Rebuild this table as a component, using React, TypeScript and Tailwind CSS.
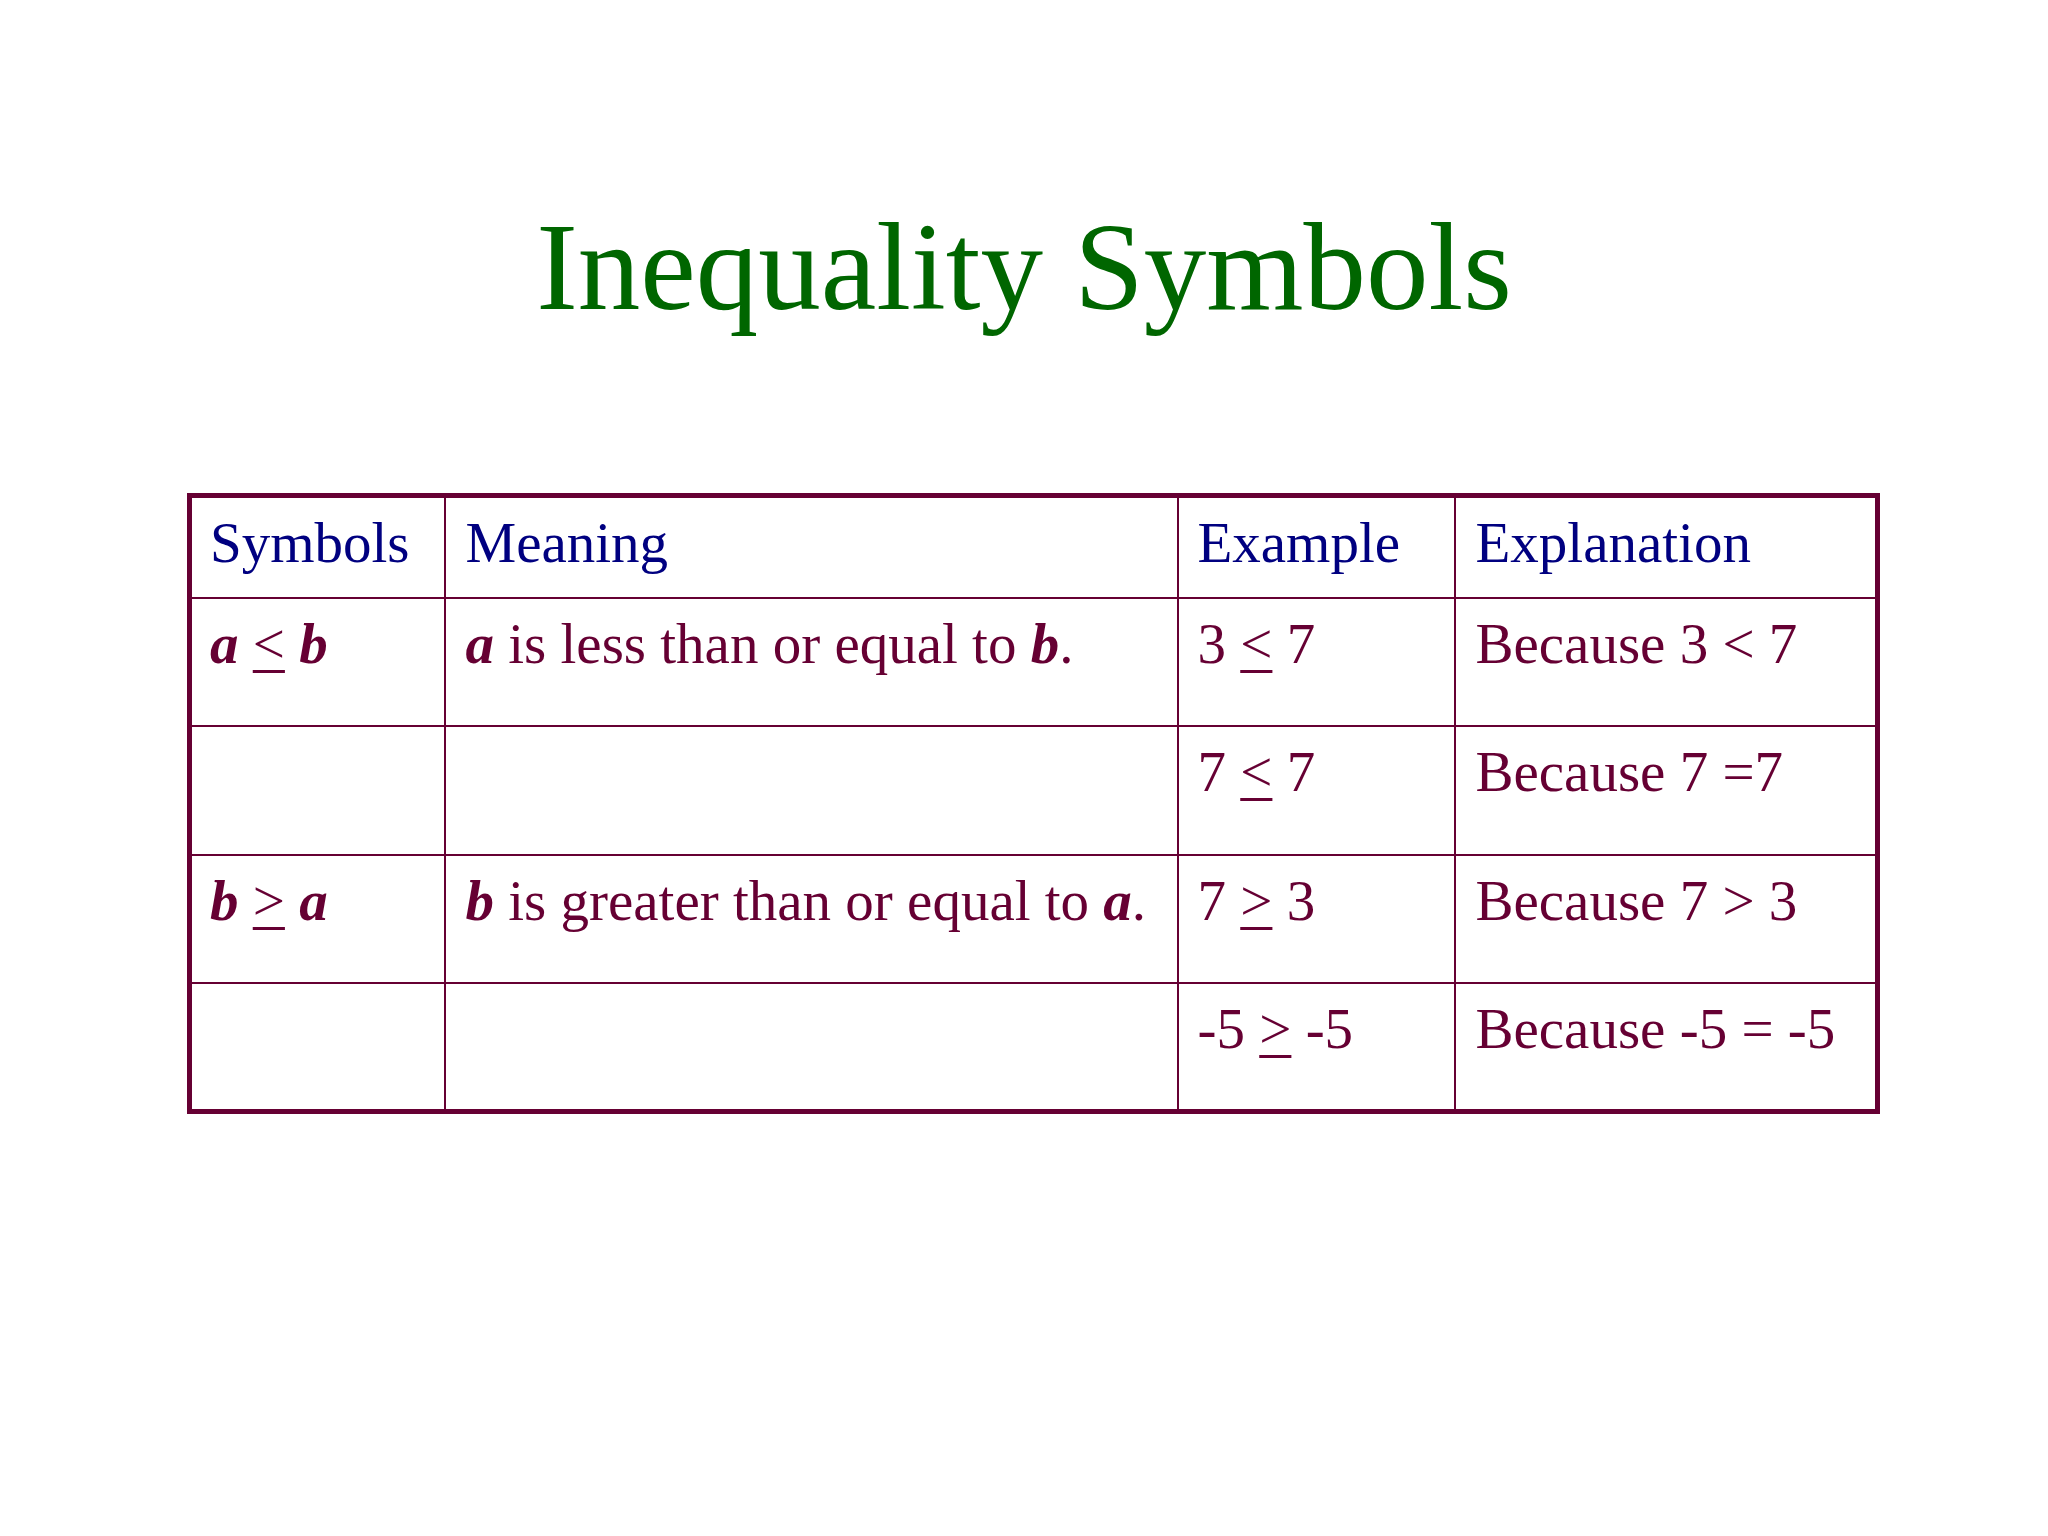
const maroon = "text-[#660033]"

function Le({ ch }: { ch: string }) {
  return (
    <span className="underline decoration-[3px] underline-offset-[7px] [text-decoration-skip-ink:none]">
      {ch}
    </span>
  )
}

function V({ children }: { children: React.ReactNode }) {
  return <span className="font-bold italic">{children}</span>
}

const cell =
  "border-2 border-[#660033] align-top pr-2 pt-[16px] leading-none whitespace-nowrap"

const pad = ["pl-[18px]", "pl-[20px]", "pl-[19px]", "pl-[20px]"]

const rows: React.ReactNode[][] = [
  [
    <>
      <V>a</V> <Le ch="<" /> <V>b</V>
    </>,
    <>
      <V>a</V> is less than or equal to <V>b</V>.
    </>,
    <>
      3 <Le ch="<" /> 7
    </>,
    "Because 3 < 7",
  ],
  [
    "",
    "",
    <>
      7 <Le ch="<" /> 7
    </>,
    "Because 7 =7",
  ],
  [
    <>
      <V>b</V> <Le ch=">" /> <V>a</V>
    </>,
    <>
      <V>b</V> is greater than or equal to <V>a</V>.
    </>,
    <>
      7 <Le ch=">" /> 3
    </>,
    "Because 7 > 3",
  ],
  [
    "",
    "",
    <>
      -5 <Le ch=">" /> -5
    </>,
    "Because -5 = -5",
  ],
]

export default function App() {
  return (
    <div className="w-[2048px] h-[1536px] bg-white font-['Liberation_Serif','Times_New_Roman',serif] overflow-hidden">
      <h1 className="pt-[205px] text-center text-[125px] leading-none text-[#006600]">
        Inequality Symbols
      </h1>

      <table className="mt-[163px] ml-[187px] border-collapse border-[5px] border-[#660033] text-[57px] table-fixed w-[1688px]">
        <colgroup>
          <col className="w-[255px]" />
          <col className="w-[733px]" />
          <col className="w-[277px]" />
          <col className="w-[423px]" />
        </colgroup>
        <thead>
          <tr className="h-[102px] text-[#000080]">
            {["Symbols", "Meaning", "Example", "Explanation"].map((h, j) => (
              <th key={h} className={`${cell} ${pad[j]} text-left font-normal`}>
                {h}
              </th>
            ))}
          </tr>
        </thead>
        <tbody className={maroon}>
          {rows.map((r, i) => (
            <tr key={i} className="h-[128.5px]">
              {r.map((c, j) => (
                <td key={j} className={`${cell} ${pad[j]}`}>
                  {c}
                </td>
              ))}
            </tr>
          ))}
        </tbody>
      </table>
    </div>
  )
}
